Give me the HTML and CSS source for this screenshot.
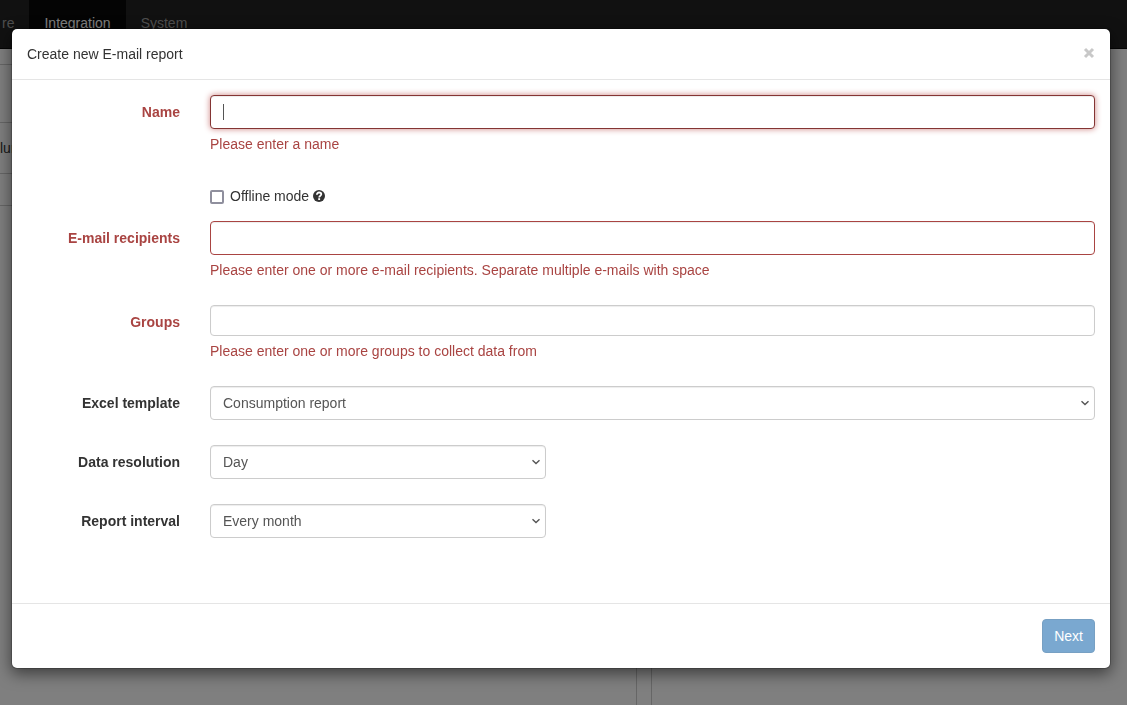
FILE: index.html
```
<!DOCTYPE html>
<html lang="en">
<head>
<meta charset="utf-8">
<meta name="viewport" content="width=device-width, initial-scale=1">
<title>Create new E-mail report</title>
<link rel="stylesheet" href="styles.css">
</head>
<body>
<div class="page">
  <nav class="navbar">
    <a class="nav-link nav-link-cut" href="#">re</a>
    <a class="nav-link active" href="#">Integration</a>
    <a class="nav-link" href="#">System</a>
  </nav>
  <main class="panels">
    <section class="panel panel-left">
      <div class="panel-head"></div>
      <div class="panel-row">lumn</div>
      <div class="panel-foot"></div>
    </section>
    <section class="panel panel-right"></section>
  </main>
</div>
<div class="backdrop"></div>

<div class="modal" role="dialog" aria-labelledby="modal-title">
  <form class="modal-content">
    <header class="modal-header">
      <h4 class="modal-title" id="modal-title">Create new E-mail report</h4>
      <button class="close" type="button" aria-label="Close">
        <svg width="12" height="12" viewBox="0 0 12 12"><path d="M2 2 10 10M10 2 2 10" fill="none" stroke="#c8c8c8" stroke-width="3"/></svg>
      </button>
    </header>
    <div class="modal-body">
      <div class="form-group has-error">
        <label class="control-label" for="name">Name</label>
        <div class="field">
          <div class="control-wrap">
            <input class="form-control focused" id="name" type="text">
            <span class="caret"></span>
          </div>
          <p class="help">Please enter a name</p>
        </div>
      </div>
      <div class="form-group form-group-check">
        <div class="field field-offset">
          <label class="check-label"><input class="check" type="checkbox">Offline mode</label>
          <svg class="help-icon" width="12" height="12" viewBox="0 0 12 12"><circle cx="6" cy="6" r="6" fill="#333"/><path d="M3.900 4.700C3.900 3.200 4.800 2.500 6.100 2.500c1.300 0 2.200.7 2.200 1.800C8.300 5.700 6.200 5.700 6.200 7.400" fill="none" stroke="#fff" stroke-width="1.800"/><path d="M5.200 8.200h1.900v1.800H5.200z" fill="#fff"/></svg>
        </div>
      </div>
      <div class="form-group has-error">
        <label class="control-label" for="recipients">E-mail recipients</label>
        <div class="field">
          <input class="form-control" id="recipients" type="text">
          <p class="help">Please enter one or more e-mail recipients. Separate multiple e-mails with space</p>
        </div>
      </div>
      <div class="form-group has-error">
        <label class="control-label" for="groups">Groups</label>
        <div class="field">
          <input class="form-control tags" id="groups" type="text">
          <p class="help">Please enter one or more groups to collect data from</p>
        </div>
      </div>
      <div class="form-group">
        <label class="control-label" for="template">Excel template</label>
        <div class="field">
          <div class="control-wrap">
            <select class="form-control" id="template"><option>Consumption report</option></select>
            <svg class="chevron" width="10" height="6" viewBox="0 0 10 6"><path d="M1.500 1.300 5 4.600 8.500 1.300" fill="none" stroke="#555" stroke-width="1.400"/></svg>
          </div>
        </div>
      </div>
      <div class="form-group">
        <label class="control-label" for="resolution">Data resolution</label>
        <div class="field field-short">
          <div class="control-wrap">
            <select class="form-control" id="resolution"><option>Day</option></select>
            <svg class="chevron" width="10" height="6" viewBox="0 0 10 6"><path d="M1.500 1.300 5 4.600 8.500 1.300" fill="none" stroke="#555" stroke-width="1.400"/></svg>
          </div>
        </div>
      </div>
      <div class="form-group">
        <label class="control-label" for="interval">Report interval</label>
        <div class="field field-short">
          <div class="control-wrap">
            <select class="form-control" id="interval"><option>Every month</option></select>
            <svg class="chevron" width="10" height="6" viewBox="0 0 10 6"><path d="M1.500 1.300 5 4.600 8.500 1.300" fill="none" stroke="#555" stroke-width="1.400"/></svg>
          </div>
        </div>
      </div>
    </div>
    <footer class="modal-footer">
      <button class="btn-primary" type="button" disabled>Next</button>
    </footer>
  </form>
</div>
</body>
</html>
```
FILE: styles.css
```
*, *::before, *::after { box-sizing: border-box; }
html, body { height: 100%; }
body {
  margin: 0;
  overflow: hidden;
  font-family: "Liberation Sans", Arial, sans-serif;
  font-size: 14px;
  line-height: 20px;
  color: #333;
  background: #fff;
}
p, h4 { margin: 0; }
input, select, button { font: inherit; }

.page { display: flex; flex-direction: column; min-height: 100%; }
.navbar {
  display: flex;
  height: 49px;
  background: #222;
  border-bottom: 1px solid #080808;
}
.nav-link { padding: 13px 15px; color: #9d9d9d; text-decoration: none; }
.nav-link-cut { padding-left: 2px; }
.nav-link.active { color: #fff; background: #080808; }
.panels {
  flex: 1;
  display: grid;
  grid-template-columns: 91fr 68fr;
  gap: 14px;
  padding-top: 15px;
}
.panel { border: 1px solid #ccc; border-bottom: 0; }
.panel-left { border-left: 0; }
.panel-right { border-top: 0; border-right: 0; }
.panel-head { height: 58px; border-bottom: 1px solid #ccc; }
.panel-row { padding: 15px 0; border-bottom: 1px solid #ccc; }
.panel-foot { height: 32px; border-bottom: 1px solid #ccc; }

.backdrop { position: fixed; inset: 0; background: #000; opacity: .5; }

.modal { position: absolute; inset: 0; padding: 28px 16px 0 11px; }
.modal-content {
  background: #fff;
  background-clip: padding-box;
  border: 1px solid rgba(0, 0, 0, .2);
  border-radius: 6px;
  box-shadow: 0 5px 15px rgba(0, 0, 0, .5);
}
.modal-header {
  display: flex;
  justify-content: space-between;
  align-items: center;
  padding: 15px;
  border-bottom: 1px solid #e5e5e5;
}
.modal-title { font-size: 14px; font-weight: 400; }
.close { display: flex; padding: 0 0 2px; border: 0; background: none; }

.modal-body { padding: 15px 0 40px; }
.form-group { display: flex; margin-bottom: 25px; }
.form-group-check { margin-bottom: 15px; }
.control-label {
  width: 16.6667%;
  padding: 7px 15px 0;
  text-align: right;
  font-weight: 700;
}
.field { width: 83.3333%; padding: 0 15px; }
.field-short { width: 33.3333%; }
.field-offset {
  display: flex;
  align-items: center;
  gap: 4px;
  margin-left: 16.6667%;
  padding-top: 7px;
}
.control-wrap { position: relative; }
.form-control {
  display: block;
  width: 100%;
  height: 34px;
  padding: 6px 12px;
  color: #555;
  background: #fff;
  border: 1px solid #ccc;
  border-radius: 4px;
  box-shadow: inset 0 1px 1px rgba(0, 0, 0, .075);
  appearance: none;
  outline: 0;
}
.has-error { color: #a94442; }
.has-error .form-control { border-color: #a94442; }
.has-error .focused {
  border-color: #843534;
  box-shadow: inset 0 1px 1px rgba(0, 0, 0, .075), 0 0 6px #ce8483;
}
.has-error .tags { height: 31px; border-color: #ccc; }
.help { margin-top: 5px; }
.caret { position: absolute; left: 13px; top: 9px; width: 1px; height: 16px; background: #555; }
.chevron { position: absolute; right: 5px; top: 14px; pointer-events: none; }

.check-label { display: flex; align-items: center; gap: 6px; }
.check {
  width: 14px;
  height: 14px;
  margin: 1px 0 0;
  border: 2px solid #8f8f9d;
  border-radius: 2px;
  background: #fff;
  appearance: none;
}

.modal-footer {
  display: flex;
  justify-content: flex-end;
  padding: 15px;
  border-top: 1px solid #e5e5e5;
}
.btn-primary {
  height: 34px;
  padding: 6px 11px;
  line-height: 20px;
  color: #fff;
  background: #337ab7;
  border: 1px solid #2e6da4;
  border-radius: 4px;
  opacity: .65;
}
```
